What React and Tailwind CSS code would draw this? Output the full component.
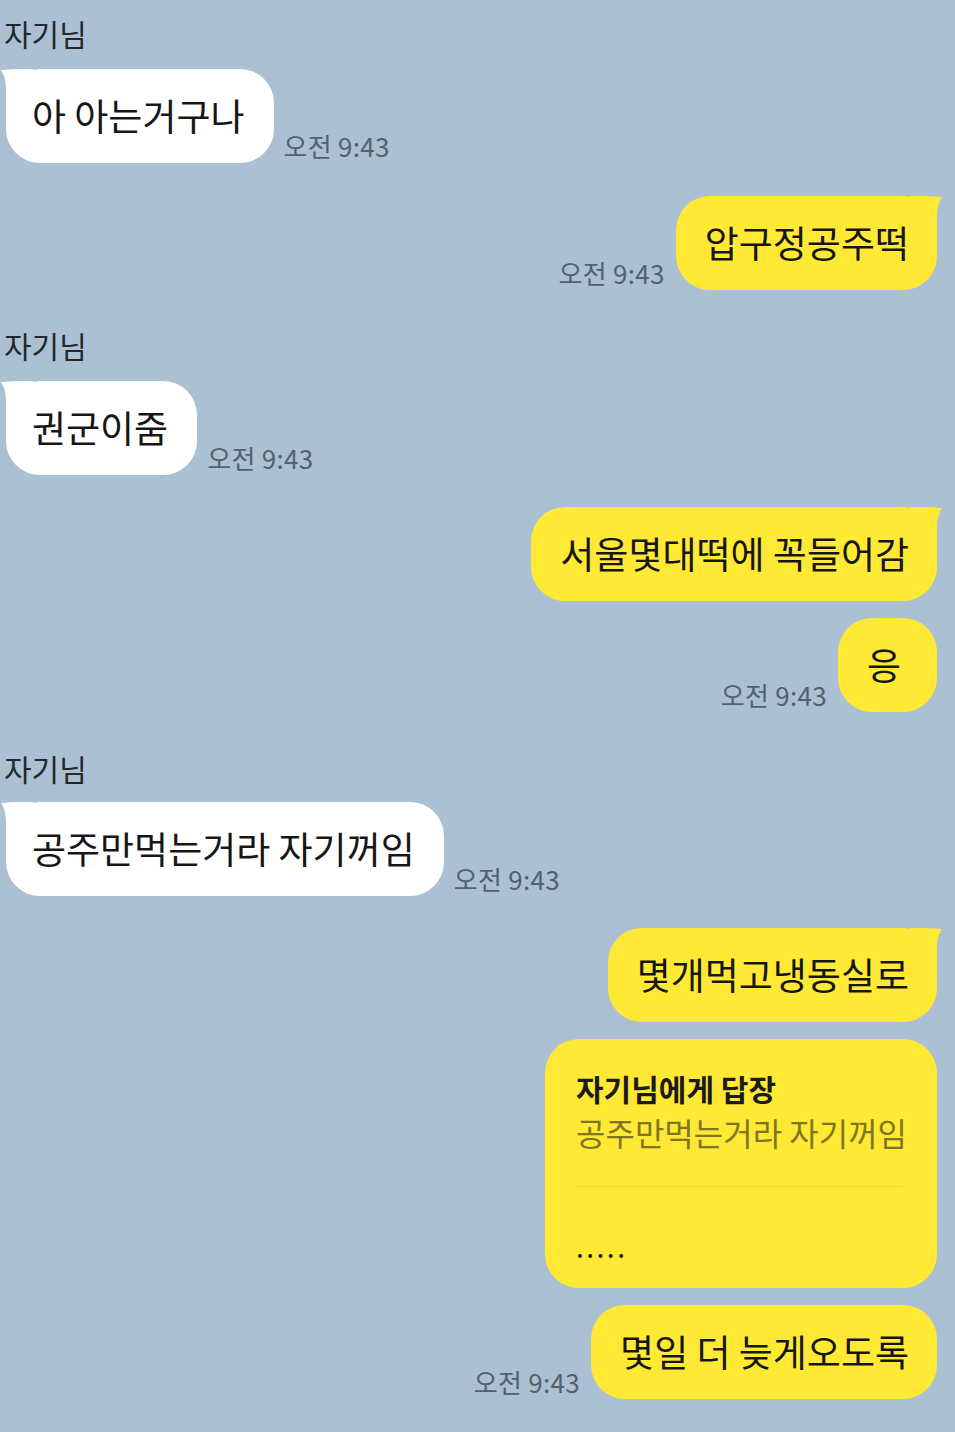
import React from 'react'

const FONT = "font-['Noto_Sans_CJK_KR','Noto_Sans',sans-serif]"

function Tail({ side, color }) {
  if (side === 'left') {
    return (
      <svg className="absolute -left-[5px] top-0" width="32" height="34" viewBox="0 0 32 34">
        <path d="M0 1Q10 0 22 0L32 0L32 34L5 34L5 20Q5 8 0 1Z" fill={color} />
      </svg>
    )
  }
  return (
    <svg className="absolute -right-[5px] top-0" width="32" height="34" viewBox="0 0 32 34">
      <path d="M32 1Q22 0 10 0L0 0L0 34L27 34L27 20Q27 8 32 1Z" fill={color} />
    </svg>
  )
}

function Time() {
  return (
    <span className="text-[26px] leading-[30px] tracking-[0.3px] text-[#53606d] whitespace-nowrap mb-[2px]">오전 9:43</span>
  )
}

function Name({ className = '' }) {
  return <div className={`pl-[4px] text-[30px] leading-[40px] text-[#24282c] ${className}`}>자기님</div>
}

function TheirBubble({ text, tail, time, className = '' }) {
  return (
    <div className={`flex items-end gap-[10px] pl-[6px] ${className}`}>
      <div className="relative rounded-[34px] bg-white pl-[26px] pr-[29px] pt-[24px] pb-[26px] text-[37px] leading-[44px] text-[#161616] whitespace-nowrap">
        {tail && <Tail side="left" color="#ffffff" />}
        <span className="relative">{text}</span>
      </div>
      {time && <Time />}
    </div>
  )
}

function MyBubble({ text, tail, time, className = '', bubbleClass = '' }) {
  return (
    <div className={`flex items-end justify-end gap-[11px] pr-[18px] ${className}`}>
      {time && <Time />}
      <div className={`relative rounded-[34px] bg-[#ffe935] pl-[29px] pr-[28px] pt-[24px] pb-[26px] text-[37px] leading-[44px] text-[#161616] whitespace-nowrap ${bubbleClass}`}>
        {tail && <Tail side="right" color="#ffe935" />}
        <span className="relative">{text}</span>
      </div>
    </div>
  )
}

function ReplyBubble({ className = '' }) {
  return (
    <div className={`flex justify-end pr-[18px] ${className}`}>
      <div className="w-[392px] rounded-[34px] bg-[#ffe935] pl-[31px] pr-[34px] pt-[31px] pb-[24px]">
        <div className="text-[30px] leading-[36px] font-bold text-[#1b1b1b] whitespace-nowrap">자기님에게 답장</div>
        <div className="mt-[6px] text-[32px] leading-[40px] text-[#7f7520] whitespace-nowrap">공주만먹는거라 자기꺼임</div>
        <div className="mt-[34px] h-px bg-[#ecd62a]" />
        <div className="mt-[41px] text-[28px] leading-[36px] tracking-[2.5px] text-[#1b1b1b]">.....</div>
      </div>
    </div>
  )
}

export default function App() {
  return (
    <div className={`min-h-[1432px] w-full bg-[#abc1d3] pt-[13px] pb-[30px] overflow-hidden ${FONT}`}>
      <Name />
      <TheirBubble className="mt-[16px]" text="아 아는거구나" tail time />

      <MyBubble className="mt-[33px]" text="압구정공주떡" tail time />

      <Name className="mt-[35px]" />
      <TheirBubble className="mt-[16px]" text="권군이줌" tail time />

      <MyBubble className="mt-[32px]" text="서울몇대떡에 꼭들어감" tail />
      <MyBubble className="mt-[17px]" text="응" time bubbleClass="min-w-[99px]" />

      <Name className="mt-[36px]" />
      <TheirBubble className="mt-[14px]" text="공주만먹는거라 자기꺼임" tail time />

      <MyBubble className="mt-[32px]" text="몇개먹고냉동실로" tail />
      <ReplyBubble className="mt-[17px]" />
      <MyBubble className="mt-[17px]" text="몇일 더 늦게오도록" time />
    </div>
  )
}
